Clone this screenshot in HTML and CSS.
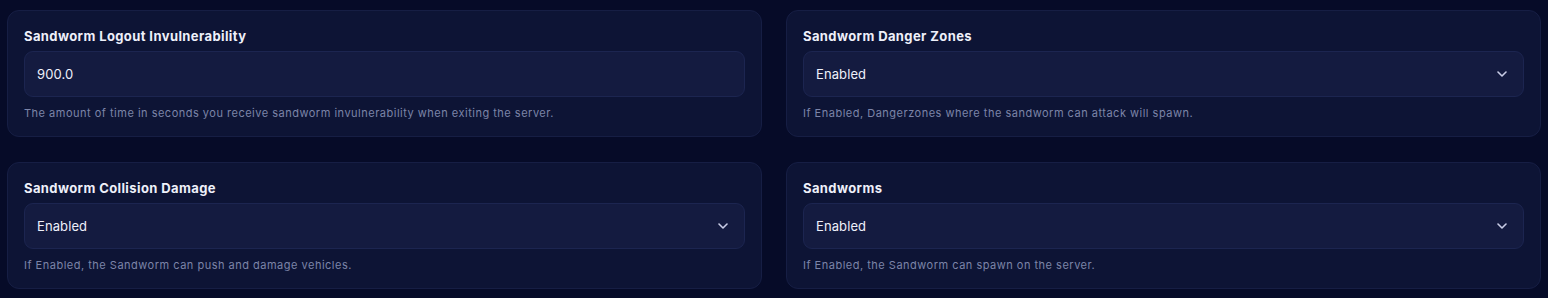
FILE: index.html
```html
<!DOCTYPE html>
<html lang="en">
<head>
    <meta charset="UTF-8">
    <meta name="viewport" content="width=device-width, initial-scale=1.0">
    <title>Sandworm Settings</title>
    <link rel="stylesheet" href="styles.css">
</head>
<body>
    <div class="settings-grid">
        <div class="setting-card">
            <label class="setting-label" for="logoutInv">Sandworm Logout Invulnerability</label>
            <input class="setting-input" type="text" id="logoutInv" value="900.0">
            <p class="setting-help">The amount of time in seconds you receive sandworm invulnerability when exiting the server.</p>
        </div>
        <div class="setting-card">
            <label class="setting-label" for="dangerZones">Sandworm Danger Zones</label>
            <div class="select-wrap">
                <select class="setting-input" id="dangerZones">
                    <option>Enabled</option>
                    <option>Disabled</option>
                </select>
                <svg class="chevron" viewBox="0 0 10 6" width="10" height="6"><path d="M1 1l4 4 4-4" fill="none" stroke="currentColor" stroke-width="1.6" stroke-linecap="round" stroke-linejoin="round"/></svg>
            </div>
            <p class="setting-help">If Enabled, Dangerzones where the sandworm can attack will spawn.</p>
        </div>
        <div class="setting-card">
            <label class="setting-label" for="collision">Sandworm Collision Damage</label>
            <div class="select-wrap">
                <select class="setting-input" id="collision">
                    <option>Enabled</option>
                    <option>Disabled</option>
                </select>
                <svg class="chevron" viewBox="0 0 10 6" width="10" height="6"><path d="M1 1l4 4 4-4" fill="none" stroke="currentColor" stroke-width="1.6" stroke-linecap="round" stroke-linejoin="round"/></svg>
            </div>
            <p class="setting-help">If Enabled, the Sandworm can push and damage vehicles.</p>
        </div>
        <div class="setting-card">
            <label class="setting-label" for="sandworms">Sandworms</label>
            <div class="select-wrap">
                <select class="setting-input" id="sandworms">
                    <option>Enabled</option>
                    <option>Disabled</option>
                </select>
                <svg class="chevron" viewBox="0 0 10 6" width="10" height="6"><path d="M1 1l4 4 4-4" fill="none" stroke="currentColor" stroke-width="1.6" stroke-linecap="round" stroke-linejoin="round"/></svg>
            </div>
            <p class="setting-help">If Enabled, the Sandworm can spawn on the server.</p>
        </div>
    </div>
</body>
</html>
```

FILE: styles.css
```css
body {
    margin: 0;
    padding: 10px 7px;
    background-color: #060b28;
    font-family: Inter, "Noto Sans", sans-serif;
    color: #e8eaf6;
}
.settings-grid {
    display: grid;
    grid-template-columns: 1fr 1fr;
    column-gap: 24px;
    row-gap: 25px;
}
.setting-card {
    background-color: #0d1435;
    border: 1px solid #161e44;
    border-radius: 12px;
    padding: 16px 16px 15px;
    display: flex;
    flex-direction: column;
}
.setting-label {
    font-size: 13px;
    font-weight: 700;
    line-height: 18px;
    letter-spacing: 0.4px;
    margin-bottom: 6px;
    color: #eef0fa;
}
.select-wrap {
    position: relative;
}
.setting-input {
    display: block;
    width: 100%;
    height: 46px;
    box-sizing: border-box;
    padding: 0 12px;
    background-color: #141b40;
    border: 1px solid #1c2550;
    border-radius: 9px;
    color: #eef0fa;
    font-family: inherit;
    font-size: 13px;
    letter-spacing: 0.1px;
    outline: none;
    appearance: none;
    -webkit-appearance: none;
}
.chevron {
    position: absolute;
    right: 17px;
    top: 20px;
    color: #c9cde6;
    pointer-events: none;
}
.setting-help {
    margin: 8px 0 0;
    font-size: 11px;
    line-height: 16px;
    letter-spacing: 0.5px;
    color: #7c84a8;
}
```
